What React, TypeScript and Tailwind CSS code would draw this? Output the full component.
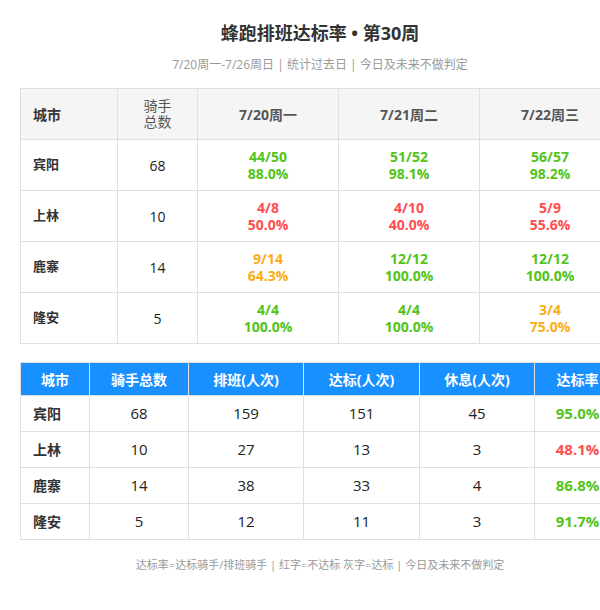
import React from 'react';

type Tone = 'ok' | 'bad' | 'warn';

const toneClass: Record<Tone, string> = {
  ok: 'text-[#52c41a]',
  bad: 'text-[#ff4d4f]',
  warn: 'text-[#faad14]',
};

const days = ['7/20周一', '7/21周二', '7/22周三'];

const weekRows: { city: string; riders: number; cells: [string, string, Tone][] }[] = [
  { city: '宾阳', riders: 68, cells: [['44/50', '88.0%', 'ok'], ['51/52', '98.1%', 'ok'], ['56/57', '98.2%', 'ok']] },
  { city: '上林', riders: 10, cells: [['4/8', '50.0%', 'bad'], ['4/10', '40.0%', 'bad'], ['5/9', '55.6%', 'bad']] },
  { city: '鹿寨', riders: 14, cells: [['9/14', '64.3%', 'warn'], ['12/12', '100.0%', 'ok'], ['12/12', '100.0%', 'ok']] },
  { city: '隆安', riders: 5, cells: [['4/4', '100.0%', 'ok'], ['4/4', '100.0%', 'ok'], ['3/4', '75.0%', 'warn']] },
];

const summaryRows: { city: string; riders: number; planned: number; passed: number; rest: number; rate: string; tone: Tone }[] = [
  { city: '宾阳', riders: 68, planned: 159, passed: 151, rest: 45, rate: '95.0%', tone: 'ok' },
  { city: '上林', riders: 10, planned: 27, passed: 13, rest: 3, rate: '48.1%', tone: 'bad' },
  { city: '鹿寨', riders: 14, planned: 38, passed: 33, rest: 4, rate: '86.8%', tone: 'ok' },
  { city: '隆安', riders: 5, planned: 12, passed: 11, rest: 3, rate: '91.7%', tone: 'ok' },
];

export default function App() {
  return (
    <div className="w-full overflow-hidden bg-white">
      <div
        className="w-[640px] px-5 pt-5 pb-8 text-[#333]"
        style={{ fontFamily: '"Open Sans", "Noto Sans CJK SC", sans-serif' }}
      >
        <h1 className="text-center text-[18px] leading-[26px] font-bold text-[#333]">
          蜂跑排班达标率 • 第30周
        </h1>
        <p className="mt-[10px] text-center text-[12px] leading-[18px] text-[#999]">
          7/20周一-7/26周日 | 统计过去日 | 今日及未来不做判定
        </p>

        {/* daily table */}
        <table className="mt-[14px] w-[600px] table-fixed border-collapse">
          <colgroup>
            <col className="w-[97px]" />
            <col className="w-[80px]" />
            <col className="w-[141px]" />
            <col className="w-[141px]" />
            <col className="w-[141px]" />
          </colgroup>
          <thead>
            <tr className="bg-[#f5f5f5]">
              <th className="h-[51px] border border-[#e0e0e0] px-3 text-left text-[14px] font-bold text-[#333]">城市</th>
              <th className="border border-[#e0e0e0] text-center text-[14px] leading-[16px] font-normal text-[#555]">
                骑手
                <br />
                总数
              </th>
              {days.map((d) => (
                <th key={d} className="border border-[#e0e0e0] text-center text-[14px] font-bold text-[#555]">
                  {d}
                </th>
              ))}
            </tr>
          </thead>
          <tbody>
            {weekRows.map((r) => (
              <tr key={r.city}>
                <td className="h-[51px] border border-[#e0e0e0] px-3 text-[13px] font-semibold text-[#333]">{r.city}</td>
                <td className="border border-[#e0e0e0] text-center text-[14px] text-[#222]">{r.riders}</td>
                {r.cells.map(([a, b, t], i) => (
                  <td
                    key={i}
                    className={`border border-[#e0e0e0] text-center text-[14px] leading-[17px] font-bold ${toneClass[t]}`}
                  >
                    <div>{a}</div>
                    <div>{b}</div>
                  </td>
                ))}
              </tr>
            ))}
          </tbody>
        </table>

        {/* summary table */}
        <table className="mt-[18px] w-[600px] table-fixed border-collapse">
          <colgroup>
            <col className="w-[69px]" />
            <col className="w-[99px]" />
            <col className="w-[115px]" />
            <col className="w-[116px]" />
            <col className="w-[115px]" />
            <col className="w-[86px]" />
          </colgroup>
          <thead>
            <tr className="bg-[#1890ff] text-white">
              {['城市', '骑手总数', '排班(人次)', '达标(人次)', '休息(人次)', '达标率'].map((h) => (
                <th key={h} className="h-[33px] border border-[#e0e0e0] text-center text-[14px] font-bold">
                  {h}
                </th>
              ))}
            </tr>
          </thead>
          <tbody>
            {summaryRows.map((r) => (
              <tr key={r.city} className="text-[15px] text-[#222]">
                <td className="h-[36px] border border-[#e0e0e0] px-3 text-[14px] font-bold text-[#333]">{r.city}</td>
                <td className="border border-[#e0e0e0] text-center">{r.riders}</td>
                <td className="border border-[#e0e0e0] text-center">{r.planned}</td>
                <td className="border border-[#e0e0e0] text-center">{r.passed}</td>
                <td className="border border-[#e0e0e0] text-center">{r.rest}</td>
                <td className={`border border-[#e0e0e0] text-center font-bold ${toneClass[r.tone]}`}>{r.rate}</td>
              </tr>
            ))}
          </tbody>
        </table>

        <p className="mt-[18px] text-center text-[11px] leading-[14px] text-[#999]">
          达标率=达标骑手/排班骑手 | 红字=不达标 灰字=达标 | 今日及未来不做判定
        </p>
      </div>
    </div>
  );
}
